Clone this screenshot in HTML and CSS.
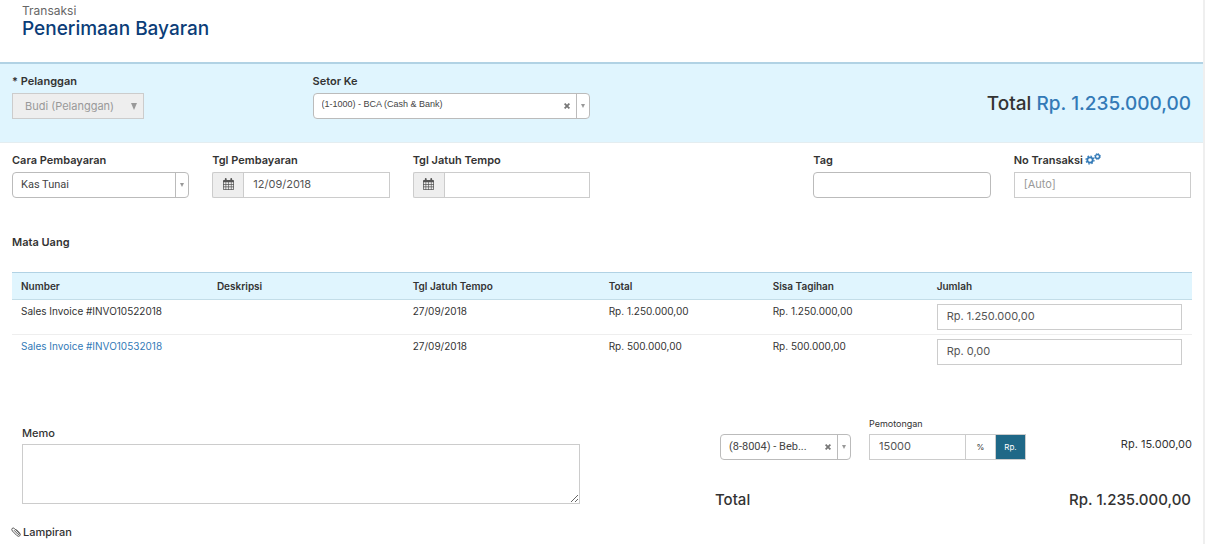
FILE: index.html
```html
<!DOCTYPE html>
<html lang="id">
<head>
<meta charset="utf-8">
<meta name="viewport" content="width=device-width, initial-scale=1">
<title>Penerimaan Bayaran</title>
<link rel="stylesheet" href="styles.css">
</head>
<body>
<svg class="defs" aria-hidden="true">
  <symbol id="calendar" viewBox="0 0 12 13">
    <path fill="currentColor" fill-rule="evenodd" d="M1 2h1V1q0-1 1-1t1 1v1h4V1q0-1 1-1t1 1v1h1q1 0 1 1v9q0 1-1 1H1q-1 0-1-1V3q0-1 1-1zM.800 4.600v1.900h2V4.600zm2.700 0v1.900h2.200V4.600zm2.900 0v1.900h2.200V4.600zm2.900 0v1.900h1.900V4.600zM.800 7.200v2.100h2V7.200zm2.700 0v2.100h2.200V7.200zm2.900 0v2.100h2.200V7.200zm2.900 0v2.100h1.900V7.200zM.800 10v2.200h2V10zm2.700 0v2.200h2.200V10zm2.900 0v2.200h2.200V10zm2.900 0v2.200h1.900V10z"/>
  </symbol>
  <symbol id="clear" viewBox="0 0 6 6">
    <path fill="none" stroke="currentColor" stroke-width="1.800" d="M.6.6l4.800 4.800M5.400.6L.6 5.400"/>
  </symbol>
</svg>
<main class="page">
  <header class="head">
    <p class="crumb">Transaksi</p>
    <h1 class="title">Penerimaan Bayaran</h1>
  </header>

  <section class="band">
    <div class="field">
      <label class="label" for="customer">* Pelanggan</label>
      <div class="pick pick-disabled">
        <select id="customer" disabled><option>Budi (Pelanggan)</option></select>
        <span class="caret"></span>
      </div>
    </div>
    <div class="field">
      <label class="label" for="deposit">Setor Ke</label>
      <div class="pick pick-high">
        <select id="deposit"><option>(1-1000) - BCA (Cash &amp; Bank)</option></select>
        <button class="clear" type="button" aria-label="Hapus"><svg><use href="#clear"/></svg></button>
        <span class="arrow"></span>
      </div>
    </div>
    <p class="grand">Total <span class="blue">Rp. 1.235.000,00</span></p>
  </section>

  <section class="details">
    <div class="field">
      <label class="label" for="method">Cara Pembayaran</label>
      <div class="pick">
        <select id="method"><option>Kas Tunai</option></select>
        <span class="arrow"></span>
      </div>
    </div>
    <div class="field">
      <label class="label" for="paid">Tgl Pembayaran</label>
      <div class="group">
        <span class="addon"><svg><use href="#calendar"/></svg></span>
        <input class="input" id="paid" type="text" value="12/09/2018">
      </div>
    </div>
    <div class="field">
      <label class="label" for="due">Tgl Jatuh Tempo</label>
      <div class="group">
        <span class="addon"><svg><use href="#calendar"/></svg></span>
        <input class="input" id="due" type="text">
      </div>
    </div>
    <div class="field field-tag">
      <label class="label" for="tag">Tag</label>
      <input class="input input-tag" id="tag" type="text">
    </div>
    <div class="field">
      <label class="label" for="number">No Transaksi
        <svg class="gears" viewBox="0 0 16 12" aria-hidden="true">
          <g fill="none" stroke="currentColor">
            <circle cx="5" cy="7" r="2.700" stroke-width="1.800"/>
            <circle cx="5" cy="7" r="4" stroke-width="1.200" stroke-dasharray="1.600 1.542"/>
            <circle cx="12.500" cy="3.500" r="2" stroke-width="1.300"/>
            <circle cx="12.500" cy="3.500" r="2.900" stroke-width="1" stroke-dasharray="1.300 .978"/>
          </g>
        </svg>
      </label>
      <input class="input" id="number" type="text" placeholder="[Auto]">
    </div>
  </section>

  <h2 class="label currency">Mata Uang</h2>

  <table class="invoices">
    <thead>
      <tr>
        <th class="wide">Number</th><th class="wide">Deskripsi</th><th class="wide">Tgl Jatuh Tempo</th>
        <th class="mid">Total</th><th class="mid">Sisa Tagihan</th><th>Jumlah</th>
      </tr>
    </thead>
    <tbody>
      <tr>
        <td>Sales Invoice #INVO10522018</td><td></td><td>27/09/2018</td>
        <td>Rp. 1.250.000,00</td><td>Rp. 1.250.000,00</td>
        <td class="amount"><input class="input" type="text" aria-label="Jumlah INVO10522018" value="Rp. 1.250.000,00"></td>
      </tr>
      <tr>
        <td><a href="#">Sales Invoice #INVO10532018</a></td><td></td><td>27/09/2018</td>
        <td>Rp. 500.000,00</td><td>Rp. 500.000,00</td>
        <td class="amount"><input class="input" type="text" aria-label="Jumlah INVO10532018" value="Rp. 0,00"></td>
      </tr>
    </tbody>
  </table>

  <section class="foot">
    <div class="memo">
      <label class="memo-label" for="memo">Memo</label>
      <textarea id="memo"></textarea>
    </div>
    <div class="sums">
      <div class="cut">
        <div class="pick pick-cut">
          <select aria-label="Akun pemotongan"><option>(8-8004) - Beb...</option></select>
          <button class="clear" type="button" aria-label="Hapus"><svg><use href="#clear"/></svg></button>
          <span class="arrow"></span>
        </div>
        <div class="cut-field">
          <label class="small" for="cut">Pemotongan</label>
          <div class="group">
            <input class="input cut-input" id="cut" type="text" value="15000">
            <button class="unit" type="button">%</button>
            <button class="unit unit-on" type="button">Rp.</button>
          </div>
        </div>
        <span class="cut-sum">Rp. 15.000,00</span>
      </div>
      <p class="total"><span>Total</span><span>Rp. 1.235.000,00</span></p>
    </div>
  </section>

  <p class="attach">
    <svg viewBox="0 0 10 10" aria-hidden="true"><path fill="none" stroke="currentColor" stroke-width=".8" d="M3 3.200l3.800 3.900q.8.700 1.300.2t-.2-1.300L3.600 1.700Q2.200.4 1.200 1.400T1.400 4l4.200 4.300q1.900 1.800 3.200.5t-.5-3.200L5 2.300"/></svg>
    Lampiran
  </p>
</main>
</body>
</html>
```
FILE: styles.css
```css
* { box-sizing: border-box; }

body {
  margin: 0;
  background: #fff;
  color: #333;
  font: 11px/16px Inter, "Open Sans", sans-serif;
}

h1, h2, p { margin: 0; }

input, select, textarea, button {
  margin: 0;
  font: inherit;
  color: inherit;
}

.defs { position: absolute; width: 0; height: 0; }

.page {
  min-height: 100vh;
  border-right: 2px solid #efefef;
}

.head {
  height: 64px;
  padding: 3px 22px 0;
  border-bottom: 2px solid #b1d2e4;
}

.crumb { font-size: 12px; color: #666; }

.title {
  font-size: 19px;
  line-height: 20px;
  font-weight: 500;
  color: #0b3d78;
}

.band, .details {
  display: grid;
  column-gap: 23px;
  padding: 9px 12px 0;
}

.band {
  grid-template-columns: repeat(4, 1fr);
  height: 79px;
  background: #e0f5fe;
  border-bottom: 1px solid #e4edf0;
}

.details { grid-template-columns: repeat(6, 1fr); }

.field { min-width: 0; }
.field-tag { grid-column: 5; }

.label {
  display: flex;
  align-items: center;
  height: 16px;
  margin-bottom: 4px;
  font-size: 11px;
  font-weight: 600;
}

.grand {
  grid-column: 3 / 5;
  padding-top: 19px;
  text-align: right;
  font-size: 19px;
  line-height: 24px;
  font-weight: 500;
}

.blue { color: #337ab7; }

.pick {
  position: relative;
  height: 26px;
  border: 1px solid #bbb;
  border-radius: 4px;
  background: #fff;
  overflow: hidden;
}

.pick select {
  display: block;
  width: 100%;
  height: 24px;
  padding: 0 32px 0 8px;
  border: 0;
  background: none;
  appearance: none;
  color: #444;
  font-family: Roboto, sans-serif;
  font-size: 11px;
}

.pick-high select {
  padding-bottom: 4px;
  font-family: "Liberation Sans", sans-serif;
  font-size: 9px;
}

.pick-disabled {
  width: 132px;
  border-color: #ccc;
  border-radius: 0;
  background: #eee;
}

.pick-disabled select {
  padding: 0 20px 0 12px;
  color: #999;
  font-family: Inter, sans-serif;
  opacity: 1;
}

.caret {
  position: absolute;
  top: 9px;
  right: 6px;
  border: 3px solid transparent;
  border-top: 7px solid #999;
  border-bottom: 0;
  pointer-events: none;
}

.arrow {
  position: absolute;
  inset: 0 0 0 auto;
  display: flex;
  align-items: center;
  justify-content: center;
  width: 13px;
  border-left: 1px solid #bbb;
  pointer-events: none;
}

.arrow::before {
  content: "";
  border: 2px solid transparent;
  border-top: 4px solid #999;
  border-bottom: 0;
}

.clear {
  position: absolute;
  inset: 0 18px 0 auto;
  display: flex;
  align-items: center;
  padding: 0 1px;
  border: 0;
  background: none;
  color: #777;
}

.clear svg { width: 6px; height: 6px; }

.input {
  display: block;
  width: 100%;
  height: 26px;
  padding: 0 9px 2px;
  border: 1px solid #ccc;
  border-radius: 0;
  background: #fff;
  color: #555;
  font-size: 11px;
}

.input::placeholder { color: #999; opacity: 1; }
.input-tag { border-color: #bbb; border-radius: 4px; }

.group { display: flex; }
.group .input { flex: 1; min-width: 0; }

.addon {
  display: grid;
  place-items: center;
  width: 31px;
  padding-bottom: 2px;
  border: 1px solid #ccc;
  border-right: 0;
  border-radius: 2px 0 0 2px;
  background: #eee;
  color: #555;
}

.addon svg { width: 11px; height: 12px; }

.gears { width: 16px; height: 12px; margin: 0 0 2px 2px; color: #337ab7; }

.currency { margin: 36px 12px 22px; }

.invoices {
  width: calc(100% - 23px);
  margin: 0 11px 0 12px;
  border-collapse: collapse;
  table-layout: fixed;
}

.invoices th {
  height: 27px;
  padding: 0 9px;
  background: #e0f5fe;
  border-top: 1px solid #b1d2e4;
  border-bottom: 1px solid #c3dde8;
  font-weight: 600;
  font-size: 10px;
  text-align: left;
}

.invoices .wide { width: 16.6%; }
.invoices .mid { width: 13.9%; }

.invoices td {
  height: 35px;
  padding: 3px 0 4px 9px;
  border-bottom: 1px solid #eee;
  vertical-align: top;
  font-size: 10px;
}

.invoices tr:last-child td { border-bottom: 0; }
.invoices .amount { padding: 4px 10px 4px 9px; }
.invoices a { color: #337ab7; text-decoration: none; }

.foot {
  display: grid;
  grid-template-columns: 62fr 53fr;
  column-gap: 135px;
  margin-top: 46px;
  padding: 0 11px 0 22px;
}

.memo { padding-top: 9px; }
.memo-label { display: block; margin-bottom: 3px; font-weight: 500; }

.memo textarea {
  display: block;
  width: 100%;
  height: 60px;
  border: 1px solid #ccc;
  resize: vertical;
}

.cut {
  display: flex;
  align-items: flex-end;
  gap: 18px;
  padding-left: 5px;
}

.pick-cut { width: 131px; }
.cut-field { width: 157px; }
.small { display: block; margin-bottom: 2px; font-size: 9px; }

.unit {
  width: 30px;
  padding: 0;
  border: 1px solid #ccc;
  border-left: 0;
  background: #fff;
  color: #333;
  font-size: 8px;
}

.unit-on { background: #1f6887; color: #fff; }
.cut-sum { margin-left: auto; padding-bottom: 8px; }

.total {
  display: flex;
  justify-content: space-between;
  margin-top: 30px;
  padding-right: 1px;
  font-size: 15px;
  line-height: 20px;
  font-weight: 500;
}

.attach {
  display: flex;
  align-items: center;
  gap: 2px;
  margin-top: 14px;
  padding-left: 11px;
  font-weight: 500;
}

.attach svg { width: 10px; height: 10px; }
```
